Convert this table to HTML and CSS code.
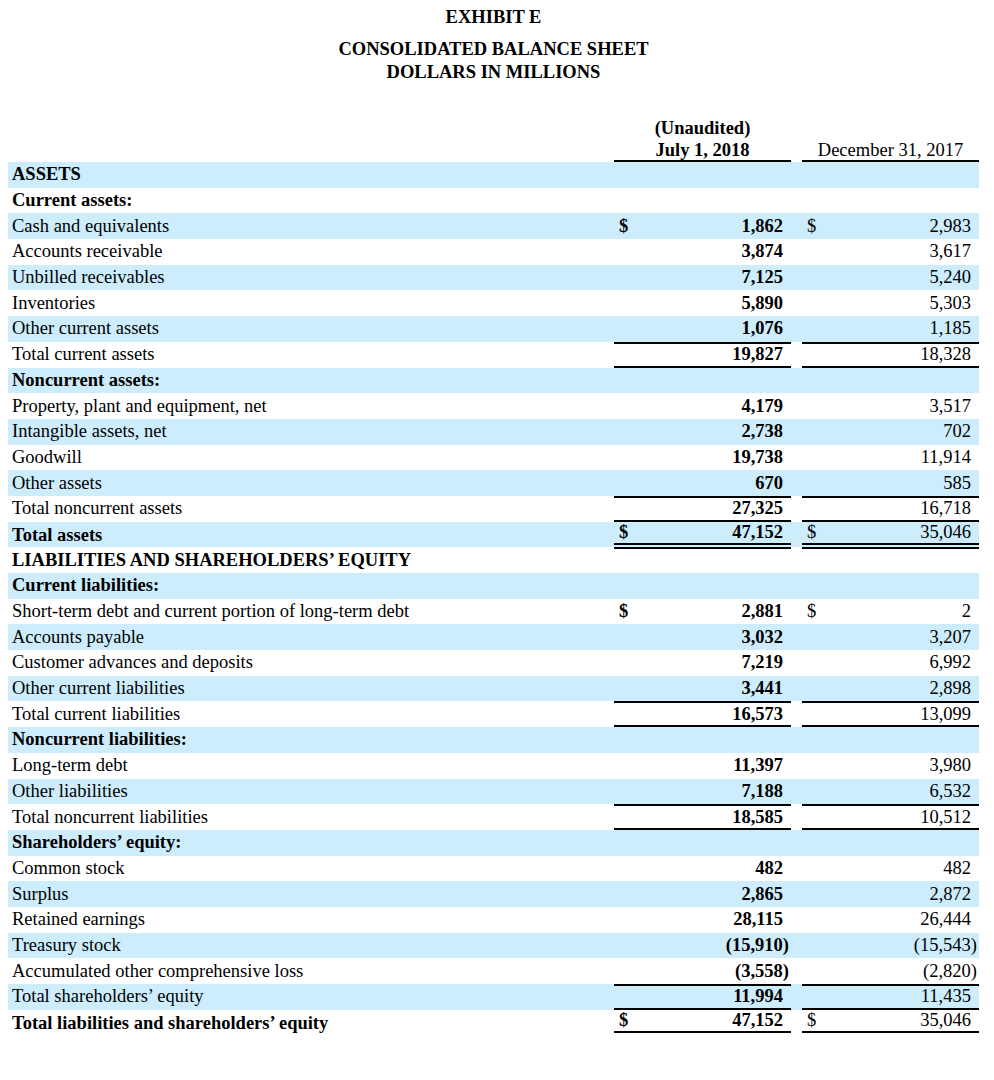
FILE: index.html
```html
<!DOCTYPE html>
<html lang="en">
<head>
<meta charset="utf-8">
<title>Exhibit E - Consolidated Balance Sheet</title>
<link rel="stylesheet" href="styles.css">
</head>
<body>
<div class="page">
  <header class="titles">
    <h1 class="exhibit">EXHIBIT E</h1>
    <h2 class="sheet">CONSOLIDATED BALANCE SHEET<br>DOLLARS IN MILLIONS</h2>
  </header>

  <div class="colhead">
    <div class="lbl"></div>
    <div class="ch bold"><span>(Unaudited)</span><span>July 1, 2018</span></div>
    <div class="gap"></div>
    <div class="ch"><span>December 31, 2017</span></div>
  </div>

  <div class="sheet-rows">
    <div class="row"><div class="lbl b">ASSETS</div><div class="amt a1"></div><div class="gap"></div><div class="amt a2"></div></div>
    <div class="row"><div class="lbl b">Current assets:</div><div class="amt a1"></div><div class="gap"></div><div class="amt a2"></div></div>
    <div class="row"><div class="lbl">Cash and equivalents</div><div class="amt a1"><span class="cur">$</span><span>1,862</span></div><div class="gap"></div><div class="amt a2"><span class="cur">$</span><span>2,983</span></div></div>
    <div class="row"><div class="lbl">Accounts receivable</div><div class="amt a1"><span>3,874</span></div><div class="gap"></div><div class="amt a2"><span>3,617</span></div></div>
    <div class="row"><div class="lbl">Unbilled receivables</div><div class="amt a1"><span>7,125</span></div><div class="gap"></div><div class="amt a2"><span>5,240</span></div></div>
    <div class="row"><div class="lbl">Inventories</div><div class="amt a1"><span>5,890</span></div><div class="gap"></div><div class="amt a2"><span>5,303</span></div></div>
    <div class="row"><div class="lbl">Other current assets</div><div class="amt a1"><span>1,076</span></div><div class="gap"></div><div class="amt a2"><span>1,185</span></div></div>
    <div class="row sub"><div class="lbl">Total current assets</div><div class="amt a1"><span>19,827</span></div><div class="gap"></div><div class="amt a2"><span>18,328</span></div></div>
    <div class="row"><div class="lbl b">Noncurrent assets:</div><div class="amt a1"></div><div class="gap"></div><div class="amt a2"></div></div>
    <div class="row"><div class="lbl">Property, plant and equipment, net</div><div class="amt a1"><span>4,179</span></div><div class="gap"></div><div class="amt a2"><span>3,517</span></div></div>
    <div class="row"><div class="lbl">Intangible assets, net</div><div class="amt a1"><span>2,738</span></div><div class="gap"></div><div class="amt a2"><span>702</span></div></div>
    <div class="row"><div class="lbl">Goodwill</div><div class="amt a1"><span>19,738</span></div><div class="gap"></div><div class="amt a2"><span>11,914</span></div></div>
    <div class="row"><div class="lbl">Other assets</div><div class="amt a1"><span>670</span></div><div class="gap"></div><div class="amt a2"><span>585</span></div></div>
    <div class="row sub"><div class="lbl">Total noncurrent assets</div><div class="amt a1"><span>27,325</span></div><div class="gap"></div><div class="amt a2"><span>16,718</span></div></div>
    <div class="row grand"><div class="lbl b">Total assets</div><div class="amt a1"><span class="cur">$</span><span>47,152</span></div><div class="gap"></div><div class="amt a2"><span class="cur">$</span><span>35,046</span></div></div>
    <div class="row"><div class="lbl b">LIABILITIES AND SHAREHOLDERS’ EQUITY</div><div class="amt a1"></div><div class="gap"></div><div class="amt a2"></div></div>
    <div class="row"><div class="lbl b">Current liabilities:</div><div class="amt a1"></div><div class="gap"></div><div class="amt a2"></div></div>
    <div class="row"><div class="lbl">Short-term debt and current portion of long-term debt</div><div class="amt a1"><span class="cur">$</span><span>2,881</span></div><div class="gap"></div><div class="amt a2"><span class="cur">$</span><span>2</span></div></div>
    <div class="row"><div class="lbl">Accounts payable</div><div class="amt a1"><span>3,032</span></div><div class="gap"></div><div class="amt a2"><span>3,207</span></div></div>
    <div class="row"><div class="lbl">Customer advances and deposits</div><div class="amt a1"><span>7,219</span></div><div class="gap"></div><div class="amt a2"><span>6,992</span></div></div>
    <div class="row"><div class="lbl">Other current liabilities</div><div class="amt a1"><span>3,441</span></div><div class="gap"></div><div class="amt a2"><span>2,898</span></div></div>
    <div class="row sub"><div class="lbl">Total current liabilities</div><div class="amt a1"><span>16,573</span></div><div class="gap"></div><div class="amt a2"><span>13,099</span></div></div>
    <div class="row"><div class="lbl b">Noncurrent liabilities:</div><div class="amt a1"></div><div class="gap"></div><div class="amt a2"></div></div>
    <div class="row"><div class="lbl">Long-term debt</div><div class="amt a1"><span>11,397</span></div><div class="gap"></div><div class="amt a2"><span>3,980</span></div></div>
    <div class="row"><div class="lbl">Other liabilities</div><div class="amt a1"><span>7,188</span></div><div class="gap"></div><div class="amt a2"><span>6,532</span></div></div>
    <div class="row sub"><div class="lbl">Total noncurrent liabilities</div><div class="amt a1"><span>18,585</span></div><div class="gap"></div><div class="amt a2"><span>10,512</span></div></div>
    <div class="row"><div class="lbl b">Shareholders’ equity:</div><div class="amt a1"></div><div class="gap"></div><div class="amt a2"></div></div>
    <div class="row"><div class="lbl">Common stock</div><div class="amt a1"><span>482</span></div><div class="gap"></div><div class="amt a2"><span>482</span></div></div>
    <div class="row"><div class="lbl">Surplus</div><div class="amt a1"><span>2,865</span></div><div class="gap"></div><div class="amt a2"><span>2,872</span></div></div>
    <div class="row"><div class="lbl">Retained earnings</div><div class="amt a1"><span>28,115</span></div><div class="gap"></div><div class="amt a2"><span>26,444</span></div></div>
    <div class="row"><div class="lbl">Treasury stock</div><div class="amt a1"><span class="neg">(15,910)</span></div><div class="gap"></div><div class="amt a2"><span class="neg">(15,543)</span></div></div>
    <div class="row"><div class="lbl">Accumulated other comprehensive loss</div><div class="amt a1"><span class="neg">(3,558)</span></div><div class="gap"></div><div class="amt a2"><span class="neg">(2,820)</span></div></div>
    <div class="row sub"><div class="lbl">Total shareholders’ equity</div><div class="amt a1"><span>11,994</span></div><div class="gap"></div><div class="amt a2"><span>11,435</span></div></div>
    <div class="row grand"><div class="lbl b">Total liabilities and shareholders’ equity</div><div class="amt a1"><span class="cur">$</span><span>47,152</span></div><div class="gap"></div><div class="amt a2"><span class="cur">$</span><span>35,046</span></div></div>
  </div>
</div>
</body>
</html>
```

FILE: styles.css
```css
html, body {
  margin: 0;
  padding: 0;
  background: #ffffff;
}

body {
  font-family: "Liberation Serif", "Times New Roman", serif;
  font-size: 18.5px;
  color: #000000;
}

.page {
  width: 971px;
  margin-left: 8px;
}

.titles {
  text-align: center;
  font-weight: bold;
}

.exhibit {
  margin: 0;
  padding-top: 5px;
  font-size: 18.5px;
  line-height: 24px;
}

.sheet {
  margin: 9px 0 0 0;
  font-size: 18.5px;
  line-height: 23px;
}

.colhead {
  display: grid;
  grid-template-columns: 606px 177px 11px 177px;
  margin-top: 31px;
  align-items: end;
}

.ch {
  display: flex;
  flex-direction: column;
  align-items: center;
  border-bottom: 2px solid #000000;
}

.ch span {
  line-height: 26px;
}

.ch span:last-child {
  line-height: 19px;
}

.bold,
.b {
  font-weight: bold;
}

.row {
  display: grid;
  grid-template-columns: 606px 177px 11px 177px;
  height: 25.7px;
  align-items: stretch;
}

.sheet-rows .row:nth-child(odd) {
  background: #cdedfc;
}

.lbl {
  padding-left: 4px;
  display: flex;
  align-items: center;
  white-space: nowrap;
}

.amt {
  box-sizing: border-box;
  display: flex;
  align-items: center;
  justify-content: flex-end;
  padding: 0 8px 0 5px;
}

.a1 {
  font-weight: bold;
}

.cur {
  margin-right: auto;
}

.neg {
  margin-right: -6px;
}

.sub .amt {
  border-top: 2px solid #000000;
  border-bottom: 2px solid #000000;
}

.grand .amt {
  border-bottom: 6px double #000000;
}
```
